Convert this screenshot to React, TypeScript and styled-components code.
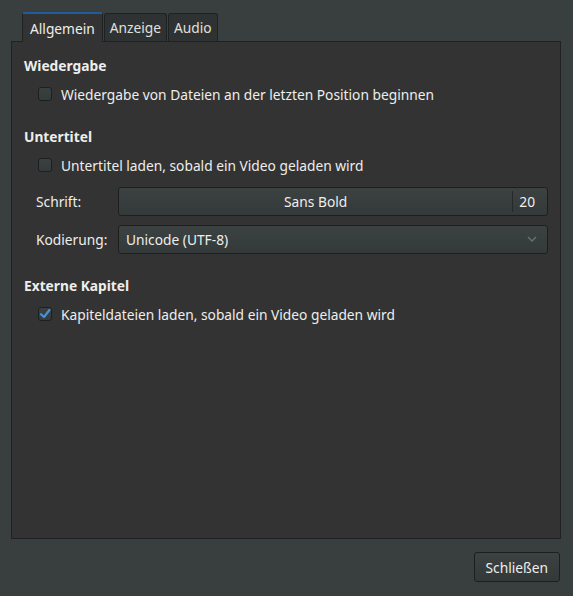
import React from "react";
import styled, { createGlobalStyle } from "styled-components";

const Global = createGlobalStyle`
  html, body { margin: 0; padding: 0; }
  body {
    background: #393f3f;
    font-family: "Noto Sans", "DejaVu Sans", sans-serif;
    font-size: 13.75px;
    color: #eeeeec;
    width: 573px;
    height: 596px;
    overflow: hidden;
  }
`;

const Dialog = styled.div`
  width: 573px;
  height: 596px;
  box-sizing: border-box;
  padding: 12px 12px 14px 11px;
  display: flex;
  flex-direction: column;
`;

const TabRow = styled.div`
  display: flex;
  padding-left: 11px;
  height: 29px;
  align-items: flex-end;
`;

const Tab = styled.div<{ $active?: boolean }>`
  height: ${(p) => (p.$active ? "30px" : "28px")};
  box-sizing: border-box;
  padding: 0 ${(p) => (p.$active ? "7px" : "5px")};
  display: flex;
  align-items: center;
  margin-right: 1px;
  background: ${(p) => (p.$active ? "#333333" : "#2f3232")};
  border: 1px solid #1f2222;
  border-bottom: none;
  border-top: ${(p) => (p.$active ? "2px solid #215d9c" : "1px solid #1f2222")};
  border-radius: 3px 3px 0 0;
  color: ${(p) => (p.$active ? "#eeeeec" : "#e0e0de")};
  position: relative;
  z-index: ${(p) => (p.$active ? 2 : 1)};
  margin-bottom: ${(p) => (p.$active ? "-1px" : "0")};
`;

const Panel = styled.div`
  height: 498px;
  box-sizing: border-box;
  background: #333333;
  border: 1px solid #1f2222;
  padding: 13px 12px 0 12px;
  display: flex;
  flex-direction: column;
`;

const Section = styled.div`
  display: flex;
  flex-direction: column;
  margin-bottom: 22px;
`;

const Heading = styled.div`
  font-weight: bold;
  height: 22px;
  line-height: 22px;
  margin-bottom: 7px;
`;

const CheckRow = styled.label`
  display: flex;
  align-items: center;
  height: 20px;
  padding-left: 14px;
  gap: 9px;
`;

const Box = styled.span<{ $checked?: boolean }>`
  width: 14px;
  height: 14px;
  box-sizing: border-box;
  border: 1px solid #1c1f1f;
  border-radius: 3px;
  background: linear-gradient(#3b4141, #353a3a);
  display: flex;
  align-items: center;
  justify-content: center;
`;

const FormGrid = styled.div`
  display: grid;
  grid-template-columns: 82px 1fr;
  row-gap: 9px;
  padding-left: 12px;
  margin-top: 12px;
  margin-bottom: -1px;
  align-items: center;
`;

const Label = styled.span``;

const FontButton = styled.div`
  height: 29px;
  box-sizing: border-box;
  border: 1px solid #1c1f1f;
  border-radius: 3px;
  background: linear-gradient(#3c4242, #343939);
  display: flex;
  align-items: center;
`;

const FontName = styled.span`
  flex: 1;
  text-align: center;
`;

const FontSize = styled.span`
  border-left: 1px solid #252929;
  height: 21px;
  line-height: 21px;
  padding: 0 12px 0 6px;
`;

const Combo = styled(FontButton)`
  padding: 0 10px 0 7px;
  justify-content: space-between;
`;

const Footer = styled.div`
  flex: 1;
  display: flex;
  justify-content: flex-end;
  align-items: flex-end;
`;

const Button = styled.button`
  font-family: inherit;
  font-size: 13.75px;
  color: #eeeeec;
  height: 30px;
  padding: 0 11px;
  border: 1px solid #1c1f1f;
  border-radius: 3px;
  background: linear-gradient(#3c4242, #333838);
  margin-right: 1px;
`;

const Check = () => (
  <svg width="12" height="12" viewBox="0 0 12 12">
    <path d="M2 6.2 L5 9 L10.5 2" fill="none" stroke="#4a90d9" strokeWidth="2.2" strokeLinecap="round" strokeLinejoin="round" />
  </svg>
);

const Chevron = () => (
  <svg width="10" height="7" viewBox="0 0 10 7">
    <path d="M1 1 L5 5 L9 1" fill="none" stroke="#6b7070" strokeWidth="1.3" />
  </svg>
);

export default function App() {
  return (
    <>
      <Global />
      <Dialog>
        <TabRow>
          <Tab $active>Allgemein</Tab>
          <Tab>Anzeige</Tab>
          <Tab>Audio</Tab>
        </TabRow>
        <Panel>
          <Section>
            <Heading>Wiedergabe</Heading>
            <CheckRow>
              <Box />
              Wiedergabe von Dateien an der letzten Position beginnen
            </CheckRow>
          </Section>
          <Section>
            <Heading>Untertitel</Heading>
            <CheckRow>
              <Box />
              Untertitel laden, sobald ein Video geladen wird
            </CheckRow>
            <FormGrid>
              <Label>Schrift:</Label>
              <FontButton>
                <FontName>Sans Bold</FontName>
                <FontSize>20</FontSize>
              </FontButton>
              <Label>Kodierung:</Label>
              <Combo>
                <span>Unicode (UTF-8)</span>
                <Chevron />
              </Combo>
            </FormGrid>
          </Section>
          <Section>
            <Heading>Externe Kapitel</Heading>
            <CheckRow>
              <Box $checked>
                <Check />
              </Box>
              Kapiteldateien laden, sobald ein Video geladen wird
            </CheckRow>
          </Section>
        </Panel>
        <Footer>
          <Button>Schließen</Button>
        </Footer>
      </Dialog>
    </>
  );
}
